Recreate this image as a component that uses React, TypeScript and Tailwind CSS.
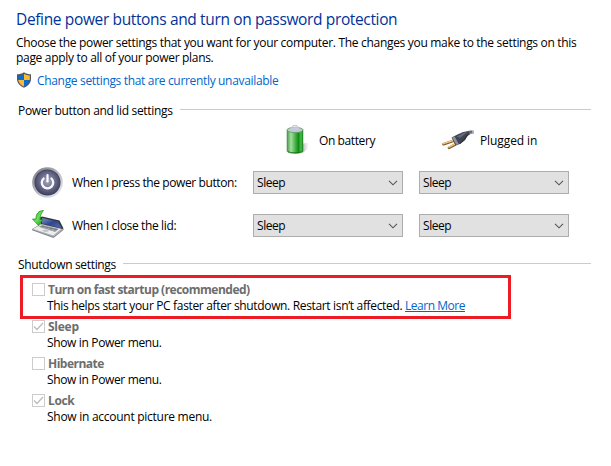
import type { ReactNode } from "react";

function ShieldIcon() {
  return (
    <svg width="16" height="16" viewBox="0 0 16 16">
      <path d="M8 .3C6 1.8 3.6 2.3 1 2.3V7c0 4 3 7 7 8.800C12 14 15 11 15 7V2.300C12.400 2.300 10 1.800 8 .3Z" fill="#50565c" />
      <path d="M8 1.700C6.300 2.800 4.300 3.300 2.200 3.400V8H8Z" fill="#0b6ccb" />
      <path d="M8 1.700C9.700 2.800 11.700 3.300 13.800 3.400V8H8Z" fill="#fdb930" />
      <path d="M2.200 8C2.700 11 5 13.300 8 14.600V8Z" fill="#fdb930" />
      <path d="M13.800 8C13.300 11 11 13.300 8 14.600V8Z" fill="#0b6ccb" />
    </svg>
  );
}

function PowerIcon() {
  return (
    <svg width="32" height="32" viewBox="0 0 32 32">
      <defs>
        <linearGradient id="rim" x1="0" y1="0" x2="1" y2="1">
          <stop offset="0" stopColor="#73747e" />
          <stop offset=".5" stopColor="#b6b7bf" />
          <stop offset="1" stopColor="#f0f0f3" />
        </linearGradient>
        <radialGradient id="face" cx=".5" cy=".45" r=".55">
          <stop offset="0" stopColor="#a3a4bd" />
          <stop offset=".55" stopColor="#6c6d8c" />
          <stop offset="1" stopColor="#42435f" />
        </radialGradient>
      </defs>
      <circle cx="15.500" cy="15.500" r="15.300" fill="url(#rim)" />
      <circle cx="15.500" cy="15.500" r="13" fill="#3d3e58" />
      <circle cx="15.500" cy="15.500" r="12.300" fill="url(#face)" />
      <path d="M11.600 11.500a5.700 5.700 0 1 0 7.800 0" fill="none" stroke="#f7f7fb" strokeWidth="2.300" strokeLinecap="round" />
      <path d="M15.500 8v6.500" stroke="#fff" strokeWidth="2.200" strokeLinecap="round" />
    </svg>
  );
}

function LidIcon() {
  return (
    <svg width="32" height="32" viewBox="0 0 32 32">
      <defs>
        <linearGradient id="screen" x1="0" y1="0" x2="1" y2="1">
          <stop offset="0" stopColor="#7d92cf" />
          <stop offset=".5" stopColor="#2f4690" />
          <stop offset="1" stopColor="#5470bc" />
        </linearGradient>
        <linearGradient id="arrow" x1="0" y1="0" x2="1" y2="1">
          <stop offset="0" stopColor="#1fa51d" />
          <stop offset=".5" stopColor="#6fe05c" />
          <stop offset="1" stopColor="#169416" />
        </linearGradient>
      </defs>
      <path d="M8 7.500 10 6.500 27.500 10.500l4 8-2.500 1.500L8.500 14Z" fill="#34363d" />
      <path d="M10 8 26 11.500l3.400 6.500L10 13.400Z" fill="url(#screen)" />
      <path d="M0 19 8.500 13.800 31 19 21.500 26.500Z" fill="#a5a8ad" />
      <path d="M1 19 9 14.800 29 19 21.300 25.500Z" fill="#eceded" />
      <path d="m7 16.800 3-1.600 16.500 3.900-3.500 2.600Z" fill="#6f727a" />
      <path d="m8.500 17.500 16 3.700M8.500 16.500l16.500 4M11 19l3-3.400M15 20l3-4M20 21l3-4" stroke="#b9bcc2" strokeWidth=".5" />
      <path d="m9.500 20.800 3.500-1.300 4.500 1.300-3.500 1.500Z" fill="#c0c3c8" />
      <path d="M0 19v1.300L21.500 28l10-8V18.700L21.500 26.500Z" fill="#85888e" />
      <path d="M11.500.5C6.500.5 3.800 4 4 9H.5l6 6.500 4.500-6H8c0-3.500 1-6 3.500-9Z" fill="url(#arrow)" stroke="#128c14" strokeWidth=".7" />
    </svg>
  );
}

function BatteryIcon() {
  return (
    <svg width="32" height="32" viewBox="0 0 32 32">
      <defs>
        <linearGradient id="cell" x1="0" x2="1">
          <stop offset="0" stopColor="#4a9c4b" />
          <stop offset=".25" stopColor="#a5dfa2" />
          <stop offset=".5" stopColor="#4db64c" />
          <stop offset=".72" stopColor="#128a18" />
          <stop offset=".88" stopColor="#45c344" />
          <stop offset="1" stopColor="#187a1d" />
        </linearGradient>
        <linearGradient id="shade" x1="0" x2="1">
          <stop offset="0" stopColor="#777" stopOpacity=".6" />
          <stop offset="1" stopColor="#aaa" stopOpacity="0" />
        </linearGradient>
      </defs>
      <path d="M22 29V20l6-1.500c2 2 .5 7-6 10.500Z" fill="url(#shade)" />
      <path d="M7 6v21c0 3.200 16 3.200 16 0V6Z" fill="url(#cell)" stroke="#368b39" strokeWidth=".5" />
      <ellipse cx="15" cy="6" rx="8" ry="2.700" fill="#bdc9c7" stroke="#579359" strokeWidth=".7" />
      <path d="M10 5.500 12.300 2c1-1 4.500-1 5.400 0L20 5.500c-1 1.800-9 1.800-10 0Z" fill="#c5cbdc" />
      <ellipse cx="15" cy="2.300" rx="2.600" ry="1" fill="#f4f6fb" stroke="#9aa3b3" strokeWidth=".5" />
      <path d="M8 27.500c2 1.700 12 1.700 14 0" fill="none" stroke="#0b6d12" strokeWidth=".8" />
    </svg>
  );
}

function PlugIcon() {
  return (
    <svg width="32" height="32" viewBox="0 0 32 32">
      <path d="M23 10.500c2-2 5-2.700 9-2.300" fill="none" stroke="#b0b2b8" strokeWidth="3.600" />
      <path d="M22 11c2-2.500 5-3.200 8-3" fill="none" stroke="#65697a" strokeWidth="2.500" />
      <path d="m1.500 20.200 9.500-3.200M7 23.800l8-4.300" stroke="#8a5b26" strokeWidth="2.600" strokeLinecap="round" />
      <path d="m1.500 19.700 9.500-3.200M7 23.200l8-4.200" stroke="#eec98c" strokeWidth="1.400" strokeLinecap="round" />
      <path d="m9.500 13.500 7-3.500c3-1.500 6-3 10-2.500l1.500 2.800c-2 .8-3.500 3.500-5 6L18 20l-4.500 1.200Z" fill="#3f4352" />
      <path d="m10 13.500 4.300 7.200 2.400-.7-4-7.500Z" fill="#8e919c" />
      <path d="m14.500 12.500 7-3.700 4-.7-7.500 6Z" fill="#646a7d" />
      <path d="m18 19.500 4.500-4.300 3-4.500" fill="none" stroke="#242833" />
    </svg>
  );
}

function SectionHeading({ children }: { children: ReactNode }) {
  return (
    <div className="flex h-4 items-center gap-[7px] pl-[18px] pr-5">
      <h2 className="tracking-[-0.33px]">{children}</h2>
      <div className="mb-px h-px flex-1 bg-[#cbcbcb]" />
    </div>
  );
}

function Select() {
  return (
    <button className="flex h-[23px] w-[150px] items-center justify-between border border-[#adadad] bg-[#e1e1e1] pl-[3px] pr-1">
      <span className="tracking-[-0.45px]">Sleep</span>
      <svg width="10" height="6" viewBox="0 0 10 6" fill="none" stroke="#555" strokeWidth="1.100">
        <path d="m1 .8 4 4 4-4" />
      </svg>
    </button>
  );
}

function SettingRow({ icon, children }: { icon: ReactNode; children: ReactNode }) {
  return (
    <div className="flex h-[43px] items-center pl-8">
      <div className="w-10">{icon}</div>
      <span className="w-[181px]">{children}</span>
      <div className="flex gap-4">
        <Select />
        <Select />
      </div>
    </div>
  );
}

function Option({ title, checked, children }: { title: ReactNode; checked?: boolean; children: ReactNode }) {
  return (
    <div className="h-[37px] pl-8">
      <label className="flex h-[17px] items-center gap-[3px] font-bold text-[#6d6d6d]">
        <span className="flex size-[13px] items-center justify-center border border-[#ccc]">
          {checked && (
            <svg width="11" height="11" viewBox="0 0 11 11" fill="none" stroke="#bcbcbc" strokeWidth="1.300">
              <path d="m1 5.500 3 3 6-6.500" />
            </svg>
          )}
        </span>
        {title}
      </label>
      <p className="h-[15px] pl-[15px] leading-[15px]">{children}</p>
    </div>
  );
}

export default function App() {
  return (
    <main className="relative h-[466px] w-[611px] overflow-hidden whitespace-nowrap bg-white pt-[9px] font-['Open_Sans','Noto_Sans',sans-serif] text-[12px] leading-[15px] text-black">
      <h1 className="h-5 pl-4 text-[15.5px] leading-5 tracking-[-0.36px] text-[#003399]">
        Define power buttons and turn on password protection
      </h1>
      <p className="mt-[6px] w-[600px] whitespace-normal pl-4 tracking-[-0.31px]">
        Choose the power settings that you want for your computer. The changes you make to the settings on this page
        apply to all of your power plans.
      </p>
      <div className="mt-[7px] flex h-4 items-center gap-[5px] pl-4">
        <ShieldIcon />
        <a className="tracking-[-0.33px] text-[#0066cc]">Change settings that are currently unavailable</a>
      </div>

      <div className="mt-[14px]">
        <SectionHeading>Power button and lid settings</SectionHeading>
      </div>
      <div className="mt-[6px] flex h-8 items-center pl-[280px]">
        <div className="flex w-[162px] items-center gap-[7px]">
          <BatteryIcon />
          <span className="tracking-[-0.4px]">On battery</span>
        </div>
        <div className="flex items-center gap-[6px]">
          <PlugIcon />
          <span className="tracking-[-0.1px]">Plugged in</span>
        </div>
      </div>
      <div className="mt-[5px]">
        <SettingRow icon={<PowerIcon />}>
          <span className="tracking-[-0.4px]">When I press the power button:</span>
        </SettingRow>
        <SettingRow icon={<LidIcon />}>
          <span className="tracking-[-0.36px]">When I close the lid:</span>
        </SettingRow>
      </div>

      <div className="mt-[9px]">
        <SectionHeading>Shutdown settings</SectionHeading>
      </div>
      <div className="mt-[9px]">
        <Option title={<span className="tracking-[-0.5px]">Turn on fast startup (recommended)</span>}>
          <span className="tracking-[-0.34px]">This helps start your PC faster after shutdown. Restart isn’t affected. </span>
          <a className="tracking-[-0.48px] text-[#0066cc] underline">Learn More</a>
        </Option>
        <Option checked title={<span className="tracking-[-0.25px]">Sleep</span>}>
          <span className="tracking-[-0.35px]">Show in Power menu.</span>
        </Option>
        <Option title={<span className="tracking-[-0.5px]">Hibernate</span>}>
          <span className="tracking-[-0.35px]">Show in Power menu.</span>
        </Option>
        <Option checked title={<span className="tracking-[-0.4px]">Lock</span>}>
          <span className="tracking-[-0.27px]">Show in account picture menu.</span>
        </Option>
      </div>

      <div className="absolute left-5 top-[275px] h-11 w-[491px] border-[3px] border-[#ed1c24]" />
    </main>
  );
}
